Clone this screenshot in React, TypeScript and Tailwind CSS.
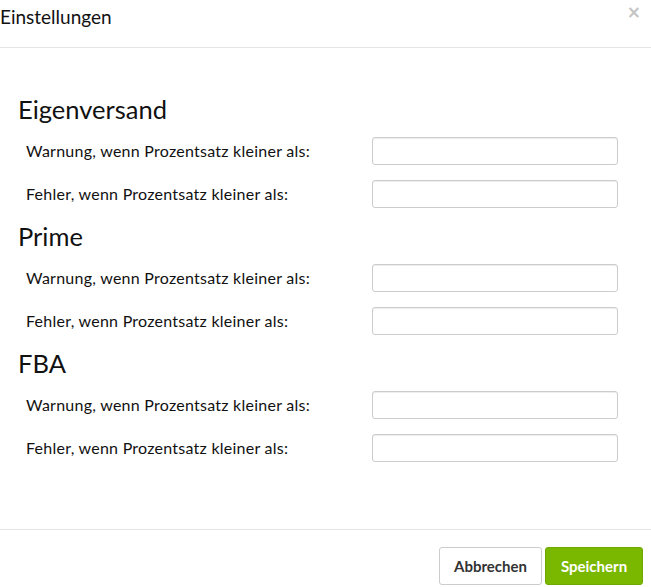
const sections = ["Eigenversand", "Prime", "FBA"];
const rows = [
  "Warnung, wenn Prozentsatz kleiner als:",
  "Fehler, wenn Prozentsatz kleiner als:",
];

export default function App() {
  return (
    <div
      className="w-[651px] h-[587px] bg-white text-[#111] flex flex-col"
      style={{ fontFamily: "Lato, 'Open Sans', sans-serif" }}
    >
      {/* header */}
      <div className="relative h-[48px] border-b border-[#e5e5e5] flex items-center">
        <h3 className="text-[19px] leading-none -mt-[14px]">Einstellungen</h3>
        <button
          className="absolute right-[10px] top-[4px] text-[#c4c4c4] text-[17px] font-bold leading-none"
          style={{ fontFamily: "'DejaVu Sans', sans-serif" }}
        >
          ×
        </button>
      </div>

      {/* body */}
      <div className="flex-1 pt-[46px] pl-[18px] pr-[33px]">
        {sections.map((s) => (
          <div key={s}>
            <h2 className="text-[25.5px] leading-[30px] h-[30px]">{s}</h2>
            <div className="flex flex-col gap-[15px] pt-[13px] pb-[13px]">
              {rows.map((r) => (
                <div key={r} className="flex items-center justify-between">
                  <label className="pl-[8px] text-[16px] tracking-[0.25px]">{r}</label>
                  <input
                    type="text"
                    className="w-[246px] h-[28px] rounded-[3px] border border-[#cccccc] shadow-[inset_0_1px_1px_rgba(0,0,0,0.075)] outline-none px-2"
                  />
                </div>
              ))}
            </div>
          </div>
        ))}
      </div>

      {/* footer */}
      <div className="h-[58px] border-t border-[#e5e5e5] flex items-end justify-end gap-[3px] pr-[8px] pb-[2px]">
        <button className="h-[38px] w-[103px] rounded-[3px] border border-[#cccccc] bg-white text-[#333] text-[15px] font-bold">
          Abbrechen
        </button>
        <button className="h-[38px] w-[98px] rounded-[3px] border border-[#6fa800] bg-[#7ab800] text-white text-[15px] font-bold">
          Speichern
        </button>
      </div>
    </div>
  );
}
